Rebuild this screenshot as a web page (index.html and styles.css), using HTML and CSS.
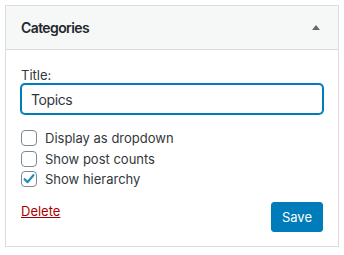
FILE: index.html
```html
<!DOCTYPE html>
<html lang="en">
<head>
  <meta charset="UTF-8" />
  <title>Categories widget</title>
  <link rel="stylesheet" href="styles.css">
</head>
<body>

  <div class="widget">
    <div class="widget-top">
      <h3>Categories</h3>
      <span class="toggle"></span>
    </div>

    <div class="widget-inside">
      <label class="field-label" for="title">Title:</label>
      <input type="text" id="title" class="title-input" value="Topics" />

      <div class="options">
        <label class="option"><span class="box"></span>Display as dropdown</label>
        <label class="option"><span class="box"></span>Show post counts</label>
        <label class="option"><span class="box checked">
          <svg width="16" height="16" viewBox="0 0 16 16"><path d="M3.6 8.2 L6.6 11.1 L12.4 4.2" fill="none" stroke="#1e8cbe" stroke-width="2.2" stroke-linecap="round" stroke-linejoin="round"/></svg>
        </span>Show hierarchy</label>
      </div>

      <div class="widget-actions">
        <a href="#" class="delete">Delete</a>
        <button class="save-btn">Save</button>
      </div>
    </div>
  </div>

</body>
</html>
```

FILE: styles.css
```css
body { margin: 0; padding: 5px; background: #fff; color: #32373c; font-family: Inter, "Liberation Sans", sans-serif; font-size: 13px; }
.widget { width: 332px; border: 1px solid #dcdcde; background: #fff; }
.widget-top { display: flex; justify-content: space-between; align-items: center; height: 43px; padding: 0 15px; background: #f6f7f7; border-bottom: 1px solid #dcdcde; }
.widget-top h3 { margin: 0; font-size: 14px; font-weight: 600; letter-spacing: -0.6px; color: #23282d; }
.toggle { width: 0; height: 0; margin-right: 3px; border-left: 4px solid transparent; border-right: 4px solid transparent; border-bottom: 5px solid #646970; }
.widget-inside { padding: 16px 15px 14px; }
.field-label { display: block; line-height: 18px; }
.title-input { display: block; box-sizing: border-box; width: 100%; height: 30px; margin: 0; padding: 0 9px; border: 1px solid #007cba; border-radius: 4px; box-shadow: 0 0 0 1px #007cba; font-family: inherit; font-size: 14px; letter-spacing: -0.4px; color: #32373c; outline: none; }
.options { margin-top: 14px; }
.option { display: flex; align-items: center; height: 20.5px; }
.box { box-sizing: border-box; width: 16px; height: 16px; margin-right: 8px; border: 1px solid #7e8993; border-radius: 4px; background: #fff; }
.box svg { display: block; margin: -1px; }
.widget-actions { display: flex; justify-content: space-between; align-items: flex-start; margin-top: 12px; }
.delete { line-height: 18px; color: #a00; }
.save-btn { height: 30px; padding: 0 10px; border: 1px solid #007cba; border-radius: 3px; background: #007cba; color: #fff; font-family: inherit; font-size: 13px; }
```
